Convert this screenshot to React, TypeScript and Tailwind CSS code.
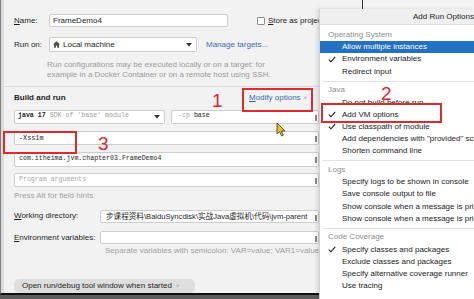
import React from "react";

const sans = "font-['Liberation_Sans','Noto_Sans_CJK_SC',sans-serif]";
const mono = "font-['Liberation_Mono',monospace]";

function Field({ children, className = "" }: { children?: React.ReactNode; className?: string }) {
  return (
    <div className={`relative flex items-center bg-white border border-[#cdcdcd] rounded-[2px] pl-[3px] ${className}`}>
      {children}
      <span className="absolute right-[1px] top-[4px] w-[2px] h-[6px] bg-[#8a8a8a]" />
    </div>
  );
}

function Check() {
  return (
    <svg width="8" height="7" viewBox="0 0 8 7" className="shrink-0">
      <path d="M0.8 3.6 L3 5.8 L7.2 0.8" fill="none" stroke="#1b1b1b" strokeWidth="1.1" />
    </svg>
  );
}

function MenuItem({ label, checked, selected }: { label: string; checked?: boolean; selected?: boolean }) {
  return (
    <div
      className={`h-[12.2px] flex items-center pl-[8px] whitespace-nowrap ${
        selected ? "bg-[#2470c2] text-white" : "text-[#1b1b1b]"
      }`}
    >
      <span className="w-[14px] shrink-0 flex">{checked && <Check />}</span>
      {label}
    </div>
  );
}

function Section({ label }: { label: string }) {
  return <div className="h-[12.2px] flex items-center pl-[8px] text-[#8d8d8d]">{label}</div>;
}

function Sep() {
  return (
    <div className="h-[6.5px] flex items-center pl-[2px]">
      <div className="h-px w-full bg-[#e3e3e3]" />
    </div>
  );
}

export default function App() {
  return (
    <div className={`relative w-[474px] h-[299px] overflow-hidden bg-[#5c5c5c] ${sans} text-[8px] leading-none text-[#1e1e1e]`}>
      <div className="h-[295px] border-b-2 border-[#101010] border-l border-l-[#7d7d7d] bg-[#f2f2f2] overflow-hidden">
        <div className="h-full border-l-[3px] border-[#dcdcdc] pl-[10px] w-[318px] flex flex-col">
          {/* Name */}
          <div className="mt-[14px] h-[14px] flex items-center">
            <span className="w-[35px] shrink-0">
              <span className="underline">N</span>ame:
            </span>
            <div className="w-[179px] shrink-0 h-full flex items-center bg-white border border-[#cdcdcd] rounded-[2px] pl-[3px]">
              FrameDemo4
            </div>
            <span className="ml-[29px] shrink-0 w-[8px] h-[8px] bg-white border border-[#8e8e8e] rounded-[1px]" />
            <span className="ml-[3px] shrink-0 whitespace-nowrap">
              <span className="underline">S</span>tore as project file
            </span>
          </div>

          {/* Run on */}
          <div className="mt-[10px] h-[15px] flex items-center">
            <span className="w-[35px] shrink-0">Run on:</span>
            <div className="w-[148px] shrink-0 h-full flex items-center bg-white border border-[#cdcdcd] rounded-[2px] pl-[3px]">
              <svg width="7" height="7" viewBox="0 0 10 10" className="mr-[3px]">
                <path d="M5 0.5 L10 5 L8.5 5 L8.5 9.5 L6 9.5 L6 6.5 L4 6.5 L4 9.5 L1.5 9.5 L1.5 5 L0 5 Z" fill="#4a4a4a" />
              </svg>
              Local machine
              <svg width="6" height="4" viewBox="0 0 6 4" className="ml-auto mr-[4px]">
                <path d="M0 0 L6 0 L3 3.5 Z" fill="#333" />
              </svg>
            </div>
            <span className="ml-[9px] text-[#3b6bc0] whitespace-nowrap">Manage targets...</span>
          </div>

          {/* Hint */}
          <div className="mt-[8px] pl-[33px] text-[#9a9a9a] leading-[10px] whitespace-nowrap">
            <div>Run configurations may be executed locally or on a target: for</div>
            <div>example in a Docker Container or on a remote host using SSH.</div>
          </div>

          <div className="mt-[6px] -ml-[10px] h-px bg-[#d9d9d9]" />

          {/* Build and run */}
          <div className="h-[24px] flex items-center">
            <span className="w-[235px] shrink-0 font-bold">Build and run</span>
            <span className="text-[#3b6bc0] whitespace-nowrap">
              <span className="underline">M</span>odify options
              <span className="ml-[3px] text-[6px] text-[#6a86b8]">˅</span>
            </span>
          </div>

          {/* java / -cp */}
          <div className="h-[15px] flex gap-[6px]">
            <div className={`w-[151px] shrink-0 flex items-center bg-white border border-[#cdcdcd] rounded-[2px] pl-[3px] ${mono} text-[6.6px]`}>
              <span className="font-bold text-[#222]">java 17</span>
              <span className="ml-[4px] text-[#a0a0a0]">SDK of 'base' module</span>
              <svg width="6" height="4" viewBox="0 0 6 4" className="ml-auto mr-[4px]">
                <path d="M0 0 L6 0 L3 3.5 Z" fill="#333" />
              </svg>
            </div>
            <Field className={`flex-1 ${mono} text-[6.6px]`}>
              <span className="text-[#a0a0a0] ml-[3px]">-cp</span>
              <span className="ml-[4px] text-[#222]">base</span>
            </Field>
          </div>

          <Field className={`mt-[7px] h-[15px] ${mono} text-[6.8px]`}>
            <span className="ml-[1px]">-Xss1m</span>
          </Field>

          <Field className={`mt-[7px] h-[15px] ${mono} text-[6.6px]`}>
            <span className="ml-[1px]">com.itheima.jvm.chapter03.FrameDemo4</span>
          </Field>

          <Field className={`mt-[6px] h-[15px] ${mono} text-[6.6px]`}>
            <span className="ml-[1px] text-[#a8a8a8]">Program arguments</span>
          </Field>

          <div className="mt-[4px] h-[10px] flex items-center text-[#a0a0a0]">Press Alt for field hints</div>

          {/* Working directory */}
          <div className="mt-[9px] h-[14px] flex items-center">
            <span className="w-[86px] shrink-0">
              <span className="underline">W</span>orking directory:
            </span>
            <Field className="flex-1 h-full overflow-hidden whitespace-nowrap text-[7.6px]">
              <span className="ml-[2px]">步课程资料\BaiduSyncdisk\实战Java虚拟机\代码\jvm-parent</span>
            </Field>
          </div>

          {/* Environment variables */}
          <div className="mt-[8px] h-[14px] flex items-center">
            <span className="w-[86px] shrink-0">
              <span className="underline">E</span>nvironment variables:
            </span>
            <Field className="flex-1 h-full" />
          </div>

          <div className="mt-[2px] pl-[91px] h-[10px] flex items-center text-[#a0a0a0] whitespace-nowrap">
            Separate variables with semicolon: VAR=value; VAR1=value1
          </div>

          <div className="mt-[23px] h-[14px] w-[181px] shrink-0 rounded-[5px] bg-[#dedede] flex items-center pl-[8px] whitespace-nowrap">
            Open run/debug tool window when started
            <span className="ml-[4px] text-[6px] text-[#888]">˅</span>
          </div>
        </div>
      </div>

      {/* strip above popup */}
      <div className="absolute left-[362px] top-0 w-[112px] h-[9px] border-l border-[#333] bg-[#f4f4f4]" />

      {/* Add Run Options popup */}
      <div className="absolute left-[319px] top-[9px] w-[155px] bottom-0 overflow-hidden bg-white border-l border-[#d0d0d0] shadow-[-2px_0_4px_rgba(0,0,0,0.12)] whitespace-nowrap">
        <div className="h-[16px] bg-[#efefef] border-b border-[#dedede] flex items-center pl-[93px] text-[#1b1b1b]">
          Add Run Options
        </div>
        <div className="h-[4px]" />
        <Section label="Operating System" />
        <MenuItem label="Allow multiple instances" selected />
        <MenuItem label="Environment variables" checked />
        <MenuItem label="Redirect input" />
        <Sep />
        <Section label="Java" />
        <MenuItem label="Do not build before run" />
        <MenuItem label="Add VM options" checked />
        <MenuItem label="Use classpath of module" checked />
        <MenuItem label={'Add dependencies with "provided" scope to classpath'} />
        <MenuItem label="Shorten command line" />
        <Sep />
        <Section label="Logs" />
        <MenuItem label="Specify logs to be shown in console" />
        <MenuItem label="Save console output to file" />
        <MenuItem label="Show console when a message is printed to stdout" />
        <MenuItem label="Show console when a message is printed to stderr" />
        <Sep />
        <Section label="Code Coverage" />
        <MenuItem label="Specify classes and packages" checked />
        <MenuItem label="Exclude classes and packages" />
        <MenuItem label="Specify alternative coverage runner" />
        <MenuItem label="Use tracing" />
      </div>

      {/* annotations */}
      <div className="absolute left-[242px] top-[88px] w-[71px] h-[24px] border-2 border-[#dc2a2f]" />
      <div className="absolute left-[3px] top-[131px] w-[74px] h-[23px] border-2 border-[#dc2a2f]" />
      <div className="absolute left-[321px] top-[103px] w-[121px] h-[20px] border-2 border-[#dc2a2f]" />
      <span className="absolute left-[212px] top-[91px] text-[19px] leading-none text-[#e0262b]">1</span>
      <span className="absolute left-[381px] top-[84px] text-[19px] leading-none text-[#e0262b]">2</span>
      <span className="absolute left-[98px] top-[134px] text-[19px] leading-none text-[#e0262b]">3</span>

      {/* mouse cursor */}
      <svg className="absolute left-[276px] top-[122px]" width="10" height="15" viewBox="0 0 10 15">
        <path d="M1 1 L1 12 L3.6 9.6 L5.6 14 L7.3 13.2 L5.4 9 L9 9 Z" fill="#e9c21c" stroke="#3a3a3a" strokeWidth="0.8" />
      </svg>
    </div>
  );
}
